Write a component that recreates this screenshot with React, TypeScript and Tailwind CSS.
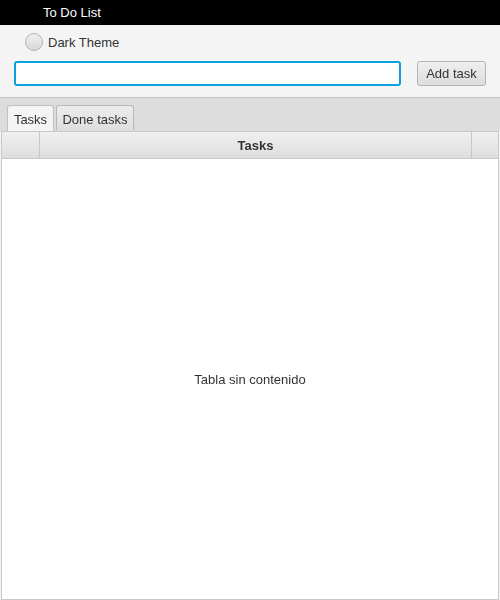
export default function App() {
  return (
    <div
      className="flex h-[600px] w-[500px] flex-col overflow-hidden bg-[#f4f4f4] text-[13px] text-[#333333]"
      style={{ fontFamily: '"Liberation Sans", Arial, sans-serif' }}
    >
      {/* title bar */}
      <div className="flex h-[25px] shrink-0 items-center bg-black pl-[43px] text-[13px] text-white">
        To Do List
      </div>

      {/* controls */}
      <div className="flex h-[73px] shrink-0 flex-col border-b border-[#c4c4c4] bg-[#f4f4f4]">
        <div className="mt-[8px] flex h-[18px] items-center pl-[25px]">
          <span className="h-[18px] w-[18px] rounded-full border border-[#b5b5b5] bg-gradient-to-b from-[#f0f0f0] to-[#d8d8d8]" />
          <span className="ml-[5px] pt-[2px]">Dark Theme</span>
        </div>
        <div className="mt-[10px] flex items-center pl-[14px]">
          <input
            className="h-[25px] w-[387px] rounded-[3px] border-2 border-[#0ba1db] bg-white px-2 outline-none"
            autoFocus
          />
          <button className="ml-[16px] h-[25px] w-[69px] rounded-[3px] border border-[#b5b5b5] bg-gradient-to-b from-[#efefef] to-[#dddddd] pt-[1px] text-[13px] text-[#333]">
            Add task
          </button>
        </div>
      </div>

      {/* tab header */}
      <div className="flex h-[33px] shrink-0 items-end gap-[2px] bg-[#dcdcdc] pl-[7px]">
        <div className="flex h-[26px] w-[47px] items-center justify-center rounded-t-[3px] border border-b-0 border-[#c0c0c0] bg-[#f4f4f4] pt-[2px]">
          Tasks
        </div>
        <div className="mb-[1px] flex h-[25px] w-[78px] items-center justify-center rounded-t-[3px] border border-b-0 border-[#b8b8b8] bg-gradient-to-b from-[#ececec] to-[#dedede] pt-[3px]">
          Done tasks
        </div>
      </div>

      {/* table */}
      <div className="mx-[1px] flex min-h-0 flex-1 flex-col border border-[#c8c8c8] bg-white">
        <div className="flex h-[27px] shrink-0 border-b border-[#c8c8c8] bg-gradient-to-b from-[#f0f0f0] to-[#dedede]">
          <div className="w-[38px] border-r border-[#c8c8c8]" />
          <div className="flex flex-1 items-center justify-center border-r border-[#c8c8c8] pt-[2px] font-bold">
            Tasks
          </div>
          <div className="w-[26px]" />
        </div>
        <div className="flex flex-1 items-center justify-center pt-[2px]">Tabla sin contenido</div>
      </div>
    </div>
  )
}
